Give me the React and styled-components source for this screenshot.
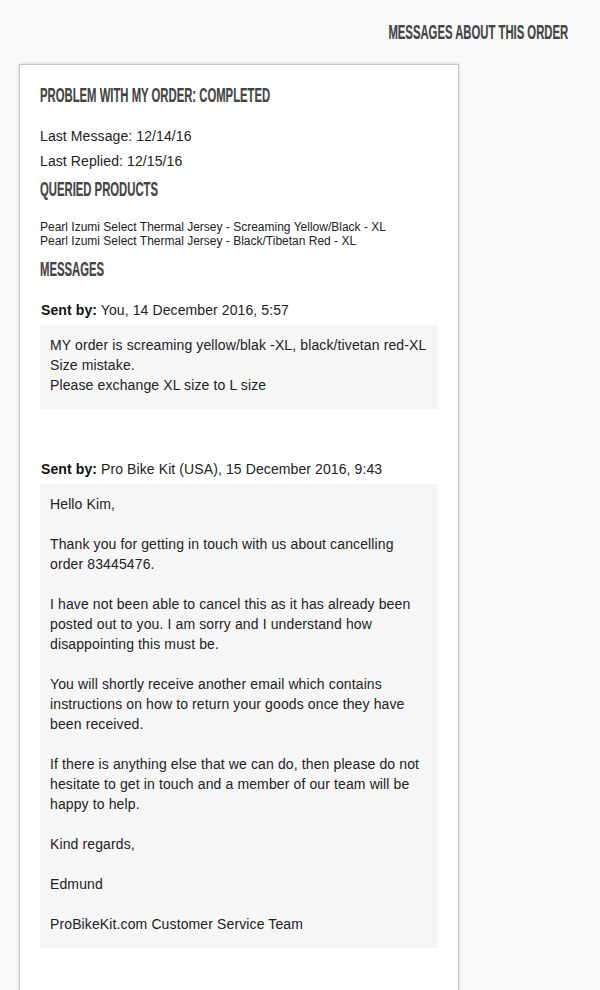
import React from "react";
import styled, { createGlobalStyle } from "styled-components";

const GlobalStyle = createGlobalStyle`
  body {
    margin: 0;
    background: #f9f9f9;
    font-family: "Liberation Sans", Arial, sans-serif;
    color: #222;
  }
`;

const Page = styled.div`
  width: 600px;
  height: 990px;
  overflow: hidden;
`;

const TopBar = styled.div`
  display: flex;
  justify-content: flex-end;
  padding: 22px 32px 0 0;
  height: 64px;
  box-sizing: border-box;
`;

const Heading = styled.h2`
  display: inline-block;
  margin: 0;
  font-family: "Liberation Sans", Arial, sans-serif;
  font-weight: 700;
  font-size: 20px;
  line-height: 20px;
  color: #444;
  -webkit-text-stroke: 0.2px #444;
  text-transform: uppercase;
  white-space: nowrap;
  transform: scaleX(0.565);
  transform-origin: ${(p) => (p.$right ? "right" : "left")} center;
`;

const Card = styled.div`
  margin: 0 0 0 19px;
  width: 440px;
  min-height: 1000px;
  box-sizing: border-box;
  background: #fff;
  border: 1px solid #c9c9c9;
  box-shadow: 0 0 3px rgba(0, 0, 0, 0.18);
  padding: 20px 20px 40px;
`;

const Section = styled.div`
  margin-top: ${(p) => p.$top || 0}px;
`;

const MetaLine = styled.div`
  font-size: 14px;
  line-height: 25px;
  letter-spacing: 0.1px;
`;

const Products = styled.div`
  font-size: 12px;
  line-height: 14px;
`;

const Message = styled.div`
  margin-top: ${(p) => p.$top || 0}px;
`;

const SentBy = styled.div`
  font-size: 14px;
  line-height: 20px;
  padding-left: 1px;
  letter-spacing: 0.1px;
  color: #222;

  b {
    color: #111;
  }
`;

const Bubble = styled.div`
  margin-top: 5px;
  background: #f6f6f6;
  padding: 10px 10px 14px;
  font-size: 14px;
  line-height: 20px;
  letter-spacing: 0.12px;
  color: #222;
`;

const Para = styled.p`
  margin: 0 0 20px;

  &:last-child {
    margin-bottom: 0;
  }
`;

const reply = [
  "Hello Kim,",
  "Thank you for getting in touch with us about cancelling order 83445476.",
  "I have not been able to cancel this as it has already been posted out to you. I am sorry and I understand how disappointing this must be.",
  "You will shortly receive another email which contains instructions on how to return your goods once they have been received.",
  "If there is anything else that we can do, then please do not hesitate to get in touch and a member of our team will be happy to help.",
  "Kind regards,",
  "Edmund",
  "ProBikeKit.com Customer Service Team",
];

const App = () => {
  return (
    <Page>
      <GlobalStyle />
      <TopBar>
        <Heading $right>Messages about this order</Heading>
      </TopBar>
      <Card>
        <Heading>Problem with my order: Completed</Heading>
        <Section $top={18}>
          <MetaLine>Last Message: 12/14/16</MetaLine>
          <MetaLine>Last Replied: 12/15/16</MetaLine>
        </Section>
        <Section $top={5}>
          <Heading>Queried Products</Heading>
        </Section>
        <Section $top={20}>
          <Products>
            Pearl Izumi Select Thermal Jersey - Screaming Yellow/Black - XL
          </Products>
          <Products>
            Pearl Izumi Select Thermal Jersey - Black/Tibetan Red - XL
          </Products>
        </Section>
        <Section $top={11}>
          <Heading>Messages</Heading>
        </Section>
        <Message $top={20}>
          <SentBy>
            <b>Sent by:</b> You, 14 December 2016, 5:57
          </SentBy>
          <Bubble>
            MY order is screaming yellow/blak -XL, black/tivetan red-XL
            <br />
            Size mistake.
            <br />
            Please exchange XL size to L size
          </Bubble>
        </Message>
        <Message $top={50}>
          <SentBy>
            <b>Sent by:</b> Pro Bike Kit (USA), 15 December 2016, 9:43
          </SentBy>
          <Bubble>
            {reply.map((line, i) => (
              <Para key={i}>{line}</Para>
            ))}
          </Bubble>
        </Message>
      </Card>
    </Page>
  );
};

export default App;
